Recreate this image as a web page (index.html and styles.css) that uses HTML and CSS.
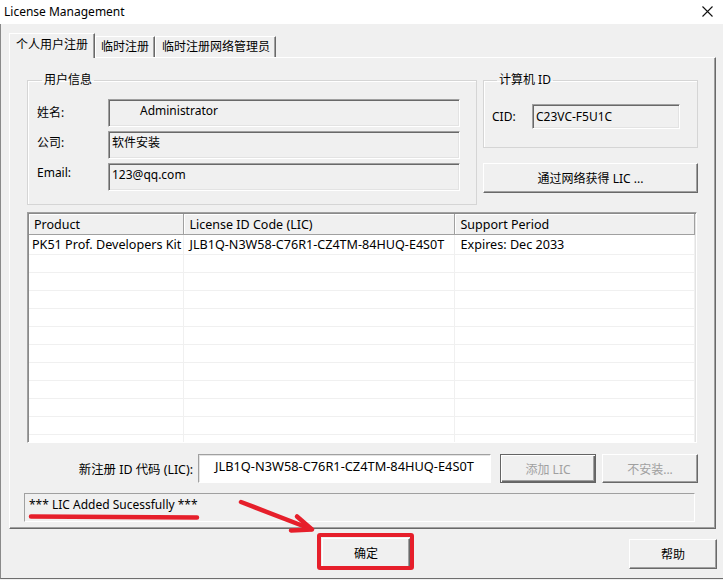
FILE: index.html
```html
<!DOCTYPE html>
<html lang="zh-CN">
    <head>
        <title>License Management</title>
        <meta charset="UTF-8">
        <link rel="stylesheet" href="styles.css">
    </head>
    <body>
        <div class="window">
            <div class="titlebar">
                <span class="title">License Management</span>
                <svg class="close" width="11" height="11" viewBox="0 0 11 11">
                    <path d="M0.5 0.5 L10.5 10.5 M10.5 0.5 L0.5 10.5" stroke="#111" stroke-width="1.1" fill="none"/>
                </svg>
            </div>

            <div class="frame">
                <div class="tabs">
                    <div class="tab active">个人用户注册</div>
                    <div class="tab">临时注册</div>
                    <div class="tab">临时注册网络管理员</div>
                </div>

                <div class="tabpage">
                    <div class="top-row">
                        <fieldset class="group user-info">
                            <legend>用户信息</legend>
                            <div class="form-row">
                                <label class="l1">姓名:</label>
                                <div class="field indent">Administrator</div>
                            </div>
                            <div class="form-row">
                                <label class="l2">公司:</label>
                                <div class="field">软件安装</div>
                            </div>
                            <div class="form-row">
                                <label class="l3">Email:</label>
                                <div class="field">123@qq.com</div>
                            </div>
                        </fieldset>

                        <div class="side">
                            <fieldset class="group cid-group">
                                <legend>计算机 ID</legend>
                                <div class="form-row">
                                    <label class="cid-label">CID:</label>
                                    <div class="field cid">C23VC-F5U1C</div>
                                </div>
                            </fieldset>
                            <button class="btn net-btn">通过网络获得 LIC ...</button>
                        </div>
                    </div>

                    <div class="list">
                        <table>
                            <colgroup>
                                <col class="c1"><col class="c2"><col class="c3">
                            </colgroup>
                            <thead>
                                <tr><th>Product</th><th>License ID Code (LIC)</th><th>Support Period</th></tr>
                            </thead>
                            <tbody>
                                <tr class="first"><td>PK51 Prof. Developers Kit</td><td>JLB1Q-N3W58-C76R1-CZ4TM-84HUQ-E4S0T</td><td>Expires: Dec 2033</td></tr>
                                <tr><td></td><td></td><td></td></tr>
                                <tr><td></td><td></td><td></td></tr>
                                <tr><td></td><td></td><td></td></tr>
                                <tr><td></td><td></td><td></td></tr>
                                <tr><td></td><td></td><td></td></tr>
                                <tr><td></td><td></td><td></td></tr>
                                <tr><td></td><td></td><td></td></tr>
                                <tr><td></td><td></td><td></td></tr>
                                <tr><td></td><td></td><td></td></tr>
                                <tr><td></td><td></td><td></td></tr>
                                <tr><td></td><td></td><td></td></tr>
                            </tbody>
                        </table>
                    </div>

                    <div class="new-row">
                        <label class="new-label">新注册 ID 代码 (LIC):</label>
                        <div class="edit">JLB1Q-N3W58-C76R1-CZ4TM-84HUQ-E4S0T</div>
                        <button class="btn small default" disabled>添加 LIC</button>
                        <button class="btn small" disabled>不安装...</button>
                    </div>

                    <div class="status">*** LIC Added Sucessfully ***</div>
                </div>

                <div class="footer">
                    <button class="btn ok">确定</button>
                    <button class="btn help">帮助</button>
                </div>
            </div>

            <svg class="marks" width="723" height="580" viewBox="0 0 723 580">
                <g stroke="#e61f2b" fill="none" stroke-linecap="round" stroke-linejoin="round">
                    <path d="M31 516.5 L197 517.5" stroke-width="4.5"/>
                    <path d="M241 502 L311 529" stroke-width="4.5"/>
                    <path d="M297 516.5 L312 529.5 L291 530.5" stroke-width="4.5"/>
                    <rect x="319" y="535" width="93" height="33" stroke-width="4" rx="1"/>
                </g>
            </svg>
        </div>
    </body>
</html>
```

FILE: styles.css
```css
body {
    margin: 0;
    font-family: 'Noto Sans', 'Noto Sans CJK SC', sans-serif;
    font-size: 12px;
    color: #000;
    background-color: #f0f0f0;
}

.window {
    position: relative;
    width: 723px;
    height: 580px;
    overflow: hidden;
    background-color: #f0f0f0;
}

.titlebar {
    height: 24px;
    background-color: #fff;
    display: flex;
    align-items: center;
    justify-content: space-between;
    padding: 0 10px 0 4px;
}
    .titlebar .title {
        font-size: 12px;
        margin-top: -1px;
    }
    .titlebar .close {
        margin-top: -1px;
    }

.frame {
    border-left: 1px solid #8a8a8a;
    border-bottom: 1px solid #6e6e6e;
    padding-top: 9px;
    box-sizing: border-box;
    height: 555px;
}

/* tabs */
.tabs {
    display: flex;
    align-items: flex-end;
    height: 24px;
    margin-left: 8px;
}

.tab {
    height: 21px;
    line-height: 20px;
    padding: 0 5px;
    box-sizing: border-box;
    border-top: 1px solid #fff;
    border-left: 1px solid #fff;
    border-right: 1px solid #696969;
    box-shadow: inset -1px 0 0 #a0a0a0;
    white-space: nowrap;
}
    .tab:last-child {
        padding: 0 5px 0 6px;
    }
    .tab.active {
        height: 25px;
        line-height: 22px;
        padding: 0 6px 0 6px;
        margin-bottom: -1px;
        position: relative;
        z-index: 1;
        background-color: #f0f0f0;
        width: 86px;
    }

.tabpage {
    margin-left: 8px;
    width: 707px;
    height: 472px;
    box-sizing: border-box;
    border-top: 1px solid #fff;
    border-left: 1px solid #fff;
    border-right: 1px solid #696969;
    border-bottom: 1px solid #696969;
    box-shadow: inset -1px -1px 0 #a0a0a0;
    padding-top: 15px;
}

/* group boxes */
.top-row {
    display: flex;
    align-items: flex-start;
}

.group {
    margin: 0;
    padding: 0;
    border: 1px solid #d5d5d5;
    box-shadow: inset 1px 1px 0 #fff;
    min-width: 0;
}
    .group legend {
        line-height: 14px;
        padding: 0 2px;
        margin-left: 5px;
    }

.user-info {
    margin-left: 17px;
    width: 450px;
    box-sizing: border-box;
    padding: 12px 0 13px 9px;
}

.form-row {
    display: flex;
    align-items: center;
}
    .form-row + .form-row {
        margin-top: 4px;
    }
    .form-row label {
        width: 71px;
        flex: none;
    }
    .form-row label.l1,
    .form-row label.l2,
    .form-row label.l3 {
        align-self: flex-start;
        line-height: 16px;
        padding-top: 6px;
    }
    .form-row label.l2 {
        padding-top: 4px;
    }
    .form-row label.l3 {
        padding-top: 2px;
    }

.field {
    width: 352px;
    height: 28px;
    box-sizing: border-box;
    border-top: 1px solid #a0a0a0;
    border-left: 1px solid #a0a0a0;
    border-bottom: 1px solid #fff;
    border-right: 1px solid #fff;
    box-shadow: inset 1px 1px 0 #696969, inset -1px -1px 0 #e3e3e3;
    padding: 2px 3px 0;
    line-height: 18px;
    white-space: nowrap;
}
    .field.indent {
        padding-left: 31px;
    }

.side {
    margin-left: 6px;
    width: 215px;
}

.cid-group {
    width: 215px;
    box-sizing: border-box;
    padding: 17px 0 18px 8px;
}
    .cid-group .cid-label {
        width: 40px;
    }
    .field.cid {
        width: 148px;
        height: 25px;
        padding-top: 3px;
    }

/* buttons */
.btn {
    font-family: inherit;
    font-size: 12px;
    color: #000;
    background-color: #f0f0f0;
    border-top: 1px solid #fff;
    border-left: 1px solid #fff;
    border-right: 1px solid #696969;
    border-bottom: 1px solid #696969;
    box-shadow: inset -1px -1px 0 #a0a0a0;
    padding: 0;
    height: 30px;
    box-sizing: border-box;
}
    .btn:disabled {
        color: #a0a0a0;
    }
    .btn.default {
        border: 1px solid #646464;
        box-shadow: inset 1px 1px 0 #fff, inset -1px -1px 0 #696969, inset -2px -2px 0 #a0a0a0;
    }

.net-btn {
    width: 215px;
    margin-top: 15px;
    display: block;
}

/* license list */
.list {
    margin: 7px 0 0 17px;
    width: 670px;
    height: 231px;
    box-sizing: border-box;
    border-top: 1px solid #a0a0a0;
    border-left: 1px solid #a0a0a0;
    border-bottom: 1px solid #fff;
    border-right: 1px solid #fff;
    box-shadow: inset 1px 1px 0 #8a8a8a, inset -1px -1px 0 #e3e3e3;
    padding: 1px;
    overflow: hidden;
}

table {
    width: 100%;
    border-collapse: collapse;
    table-layout: fixed;
    background-color: #fff;
}

col.c1 { width: 154px; }
col.c2 { width: 271px; }

th {
    font-weight: normal;
    font-size: 12.5px;
    text-align: left;
    height: 20px;
    padding: 0 0 0 5px;
    background-color: #f0f0f0;
    border-right: 1px solid #a0a0a0;
    border-bottom: 1px solid #a0a0a0;
    box-shadow: inset 1px 1px 0 #fff;
    white-space: nowrap;
}
    th + th {
        padding-left: 6px;
    }

td {
    height: 17px;
    font-size: 12.6px;
    padding: 0 0 0 3px;
    border-right: 1px solid #f0f0f0;
    border-bottom: 1px solid #f0f0f0;
    white-space: nowrap;
    overflow: hidden;
    line-height: 17px;
}
    td + td {
        padding-left: 6px;
    }
    tr.first td {
        height: 19px;
    }

/* new lic row */
.new-row {
    display: flex;
    align-items: center;
    margin-top: 11px;
}

.new-label {
    width: 183px;
    text-align: right;
    font-size: 12.4px;
}

.edit {
    margin-left: 5px;
    width: 293px;
    height: 29px;
    box-sizing: border-box;
    background-color: #fff;
    border-top: 1px solid #a0a0a0;
    border-left: 1px solid #a0a0a0;
    border-bottom: 1px solid #fff;
    border-right: 1px solid #fff;
    box-shadow: inset 1px 1px 0 #e3e3e3;
    padding: 3px 0 0 16px;
    font-size: 12.8px;
    line-height: 16px;
    white-space: nowrap;
}

.btn.small {
    width: 96px;
    height: 29px;
    margin-left: 6px;
}
    .btn.small.default {
        margin-left: 9px;
    }

.status {
    margin: 10px 0 0 14px;
    width: 671px;
    height: 29px;
    box-sizing: border-box;
    border-top: 1px solid #a0a0a0;
    border-left: 1px solid #a0a0a0;
    border-bottom: 1px solid #fff;
    border-right: 1px solid #fff;
    padding: 3px 0 0 4px;
    line-height: 16px;
}

/* dialog buttons */
.footer {
    display: flex;
    padding-top: 9px;
}

.btn.ok {
    margin-left: 321px;
    width: 88px;
}

.btn.help {
    margin-left: auto;
    margin-right: 6px;
    width: 88px;
    margin-top: 1px;
}

.marks {
    position: absolute;
    left: 0;
    top: 0;
    pointer-events: none;
}
```
